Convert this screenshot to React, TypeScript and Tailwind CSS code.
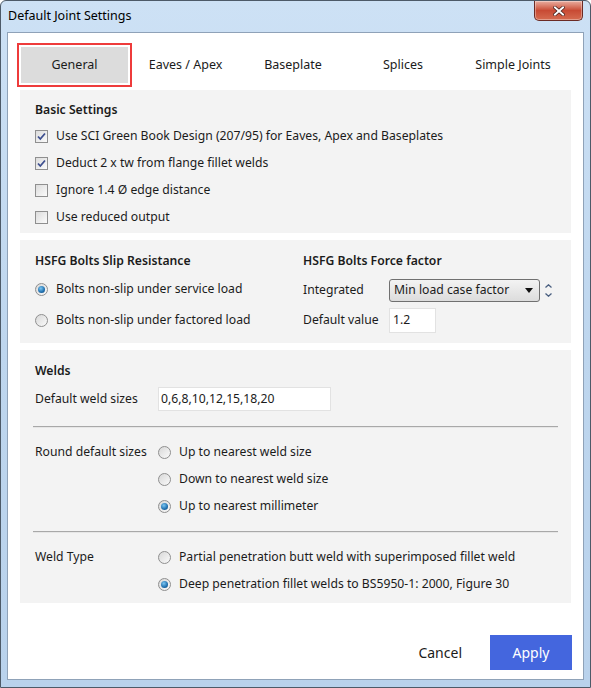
import React from 'react'

function Check({ checked }: { checked?: boolean }) {
  return (
    <span className="flex size-[13px] shrink-0 items-center justify-center border border-[#8f8f8f] bg-gradient-to-br from-[#dcdcdc] to-[#fbfbfb]">
      {checked && (
        <svg viewBox="0 0 11 11" className="size-[11px]">
          <path d="M2 5.5 L4.3 8 L9 2.5" fill="none" stroke="#3d4f8f" strokeWidth="1.8" />
        </svg>
      )}
    </span>
  )
}

function Radio({ checked }: { checked?: boolean }) {
  return (
    <span className="flex size-[13px] shrink-0 items-center justify-center rounded-full border border-[#8f8f8f] bg-gradient-to-br from-[#d8d8d8] to-[#fafafa]">
      {checked && (
        <span className="size-[7px] rounded-full bg-[radial-gradient(circle_at_40%_35%,#7cc6f2,#1f6fae_60%,#0d3f6e)]" />
      )}
    </span>
  )
}

function CheckRow({ label, checked }: { label: string; checked?: boolean }) {
  return (
    <div className="flex h-[27px] items-center gap-2">
      <Check checked={checked} />
      <span>{label}</span>
    </div>
  )
}

function RadioRow({ label, checked, h = 'h-[27px]' }: { label: string; checked?: boolean; h?: string }) {
  return (
    <div className={`flex ${h} items-center gap-2`}>
      <Radio checked={checked} />
      <span>{label}</span>
    </div>
  )
}

const tabs = [
  { label: 'General', w: 'w-[115px]' },
  { label: 'Eaves / Apex', w: 'w-[107px]' },
  { label: 'Baseplate', w: 'w-[108px]' },
  { label: 'Splices', w: 'w-[112px]' },
  { label: 'Simple Joints', w: 'w-[108px]' },
]

export default function App() {
  return (
    <div
      className="flex h-[688px] w-[591px] flex-col rounded-t-[6px] border border-[#4d5a68] bg-gradient-to-b from-[#cde1f5] via-[#bed6ee] to-[#b9d2ec] text-[12.2px] text-[#1b1b1b]"
      style={{ fontFamily: '"Noto Sans", "Open Sans", sans-serif' }}
    >
      {/* title bar */}
      <div className="flex h-[31px] shrink-0 items-start justify-between pl-[7px] pr-[7px]">
        <span className="mt-[6px] text-[12.5px] text-black">Default Joint Settings</span>
        <button className="flex h-[20px] w-[49px] items-center justify-center rounded-b-[5px] border border-t-0 border-[#6b2b25] bg-gradient-to-b from-[#e8ada0] via-[#c84a34] to-[#d56b50] shadow-[inset_0_0_0_1px_rgba(255,255,255,0.35)]">
          <svg viewBox="0 0 12 10" className="h-[10px] w-[12px]">
            <path d="M2 1.5 L10 8.5 M10 1.5 L2 8.5" stroke="#3b1a16" strokeWidth="3.4" strokeLinecap="square" />
            <path d="M2 1.5 L10 8.5 M10 1.5 L2 8.5" stroke="#ffffff" strokeWidth="2" strokeLinecap="square" />
          </svg>
        </button>
      </div>

      {/* client area */}
      <div className="mx-[6px] mb-[7px] flex flex-1 flex-col border border-[#8fa2b8] bg-white">
        {/* tabs */}
        <div className="ml-[9px] mt-[10px] flex h-[44px] text-[12.5px]">
          {tabs.map((t, i) => (
            <div
              key={t.label}
              className={`${t.w} flex items-center justify-center ${
                i === 0 ? 'border-2 border-[#ee3b3b] bg-white p-[2px]' : ''
              }`}
            >
              {i === 0 ? (
                <div className="flex size-full items-center justify-center bg-[#dcdcdc]">{t.label}</div>
              ) : (
                t.label
              )}
            </div>
          ))}
        </div>

        <div className="mx-[12px] mt-[3px] flex flex-col gap-[7px]">
          {/* basic settings */}
          <div className="flex h-[143px] flex-col bg-[#f3f3f3] px-[15px] pt-[11px]">
            <div className="flex h-[18px] items-center font-semibold">Basic Settings</div>
            <div className="mt-[4px] flex flex-col">
              <CheckRow label="Use SCI Green Book Design (207/95) for Eaves, Apex and Baseplates" checked />
              <CheckRow label="Deduct 2 x tw from flange fillet welds" checked />
              <CheckRow label="Ignore 1.4 Ø edge distance" />
              <CheckRow label="Use reduced output" />
            </div>
          </div>

          {/* HSFG */}
          <div className="flex h-[103px] bg-[#f3f3f3] px-[15px] pt-[12px]">
            <div className="flex w-[268px] flex-col">
              <div className="flex h-[18px] items-center font-semibold">HSFG Bolts Slip Resistance</div>
              <div className="mt-[4px] flex flex-col">
                <RadioRow label="Bolts non-slip under service load" checked h="h-[31px]" />
                <RadioRow label="Bolts non-slip under factored load" h="h-[31px]" />
              </div>
            </div>
            <div className="flex flex-col">
              <div className="flex h-[18px] items-center font-semibold">HSFG Bolts Force factor</div>
              <div className="mt-[9px] flex h-[23px] items-center">
                <span className="w-[86px]">Integrated</span>
                <div className="flex h-[23px] w-[151px] items-center justify-between rounded-[3px] border border-[#707070] bg-gradient-to-b from-[#f3f3f3] to-[#dcdcdc] pl-[4px] pr-[6px]">
                  <span>Min load case factor</span>
                  <svg viewBox="0 0 8 5" className="h-[5px] w-[8px]">
                    <path d="M0 0 H8 L4 5 Z" fill="#111" />
                  </svg>
                </div>
                <div className="ml-[5px] flex flex-col items-center gap-[5px]">
                  <svg viewBox="0 0 7 4" className="h-[4px] w-[7px]">
                    <path d="M0.5 3.5 L3.5 0.8 L6.5 3.5" fill="none" stroke="#4a5f80" strokeWidth="1.3" />
                  </svg>
                  <svg viewBox="0 0 7 4" className="h-[4px] w-[7px]">
                    <path d="M0.5 0.5 L3.5 3.2 L6.5 0.5" fill="none" stroke="#4a5f80" strokeWidth="1.3" />
                  </svg>
                </div>
              </div>
              <div className="mt-[6px] flex h-[25px] items-center">
                <span className="w-[86px]">Default value</span>
                <div className="flex h-[25px] w-[47px] items-center border border-[#e2e2e2] bg-white px-[3px]">1.2</div>
              </div>
            </div>
          </div>

          {/* welds */}
          <div className="flex h-[253px] flex-col bg-[#f3f3f3] px-[13px] pt-[12px]">
            <div className="flex h-[18px] items-center pl-[2px] font-semibold">Welds</div>
            <div className="mt-[7px] flex h-[24px] items-center pl-[2px]">
              <span className="w-[123px]">Default weld sizes</span>
              <div className="flex h-[24px] w-[173px] items-center border border-[#e2e2e2] bg-white px-[2px]">
                0,6,8,10,12,15,18,20
              </div>
            </div>
            <div className="mt-[15px] h-[2px] border-t border-[#a8a8a8] bg-[#e6e6e6]" />
            <div className="mt-[11px] flex pl-[2px]">
              <span className="flex h-[27px] w-[123px] items-center">Round default sizes</span>
              <div className="flex flex-col">
                <RadioRow label="Up to nearest weld size" />
                <RadioRow label="Down to nearest weld size" />
                <RadioRow label="Up to nearest millimeter" checked />
              </div>
            </div>
            <div className="mt-[11px] h-[2px] border-t border-[#a8a8a8] bg-[#e6e6e6]" />
            <div className="mt-[11px] flex pl-[2px]">
              <span className="flex h-[27px] w-[123px] items-center">Weld Type</span>
              <div className="flex flex-col">
                <RadioRow label="Partial penetration butt weld with superimposed fillet weld" />
                <RadioRow label="Deep penetration fillet welds to BS5950-1: 2000, Figure 30" checked />
              </div>
            </div>
          </div>
        </div>

        {/* buttons */}
        <div className="mr-[11px] mt-[32px] flex items-center justify-end">
          <span className="mr-[28px] text-[14px]">Cancel</span>
          <button className="flex h-[35px] w-[82px] items-center justify-center bg-[#4466de] text-[14px] text-white">
            Apply
          </button>
        </div>
      </div>
    </div>
  )
}
